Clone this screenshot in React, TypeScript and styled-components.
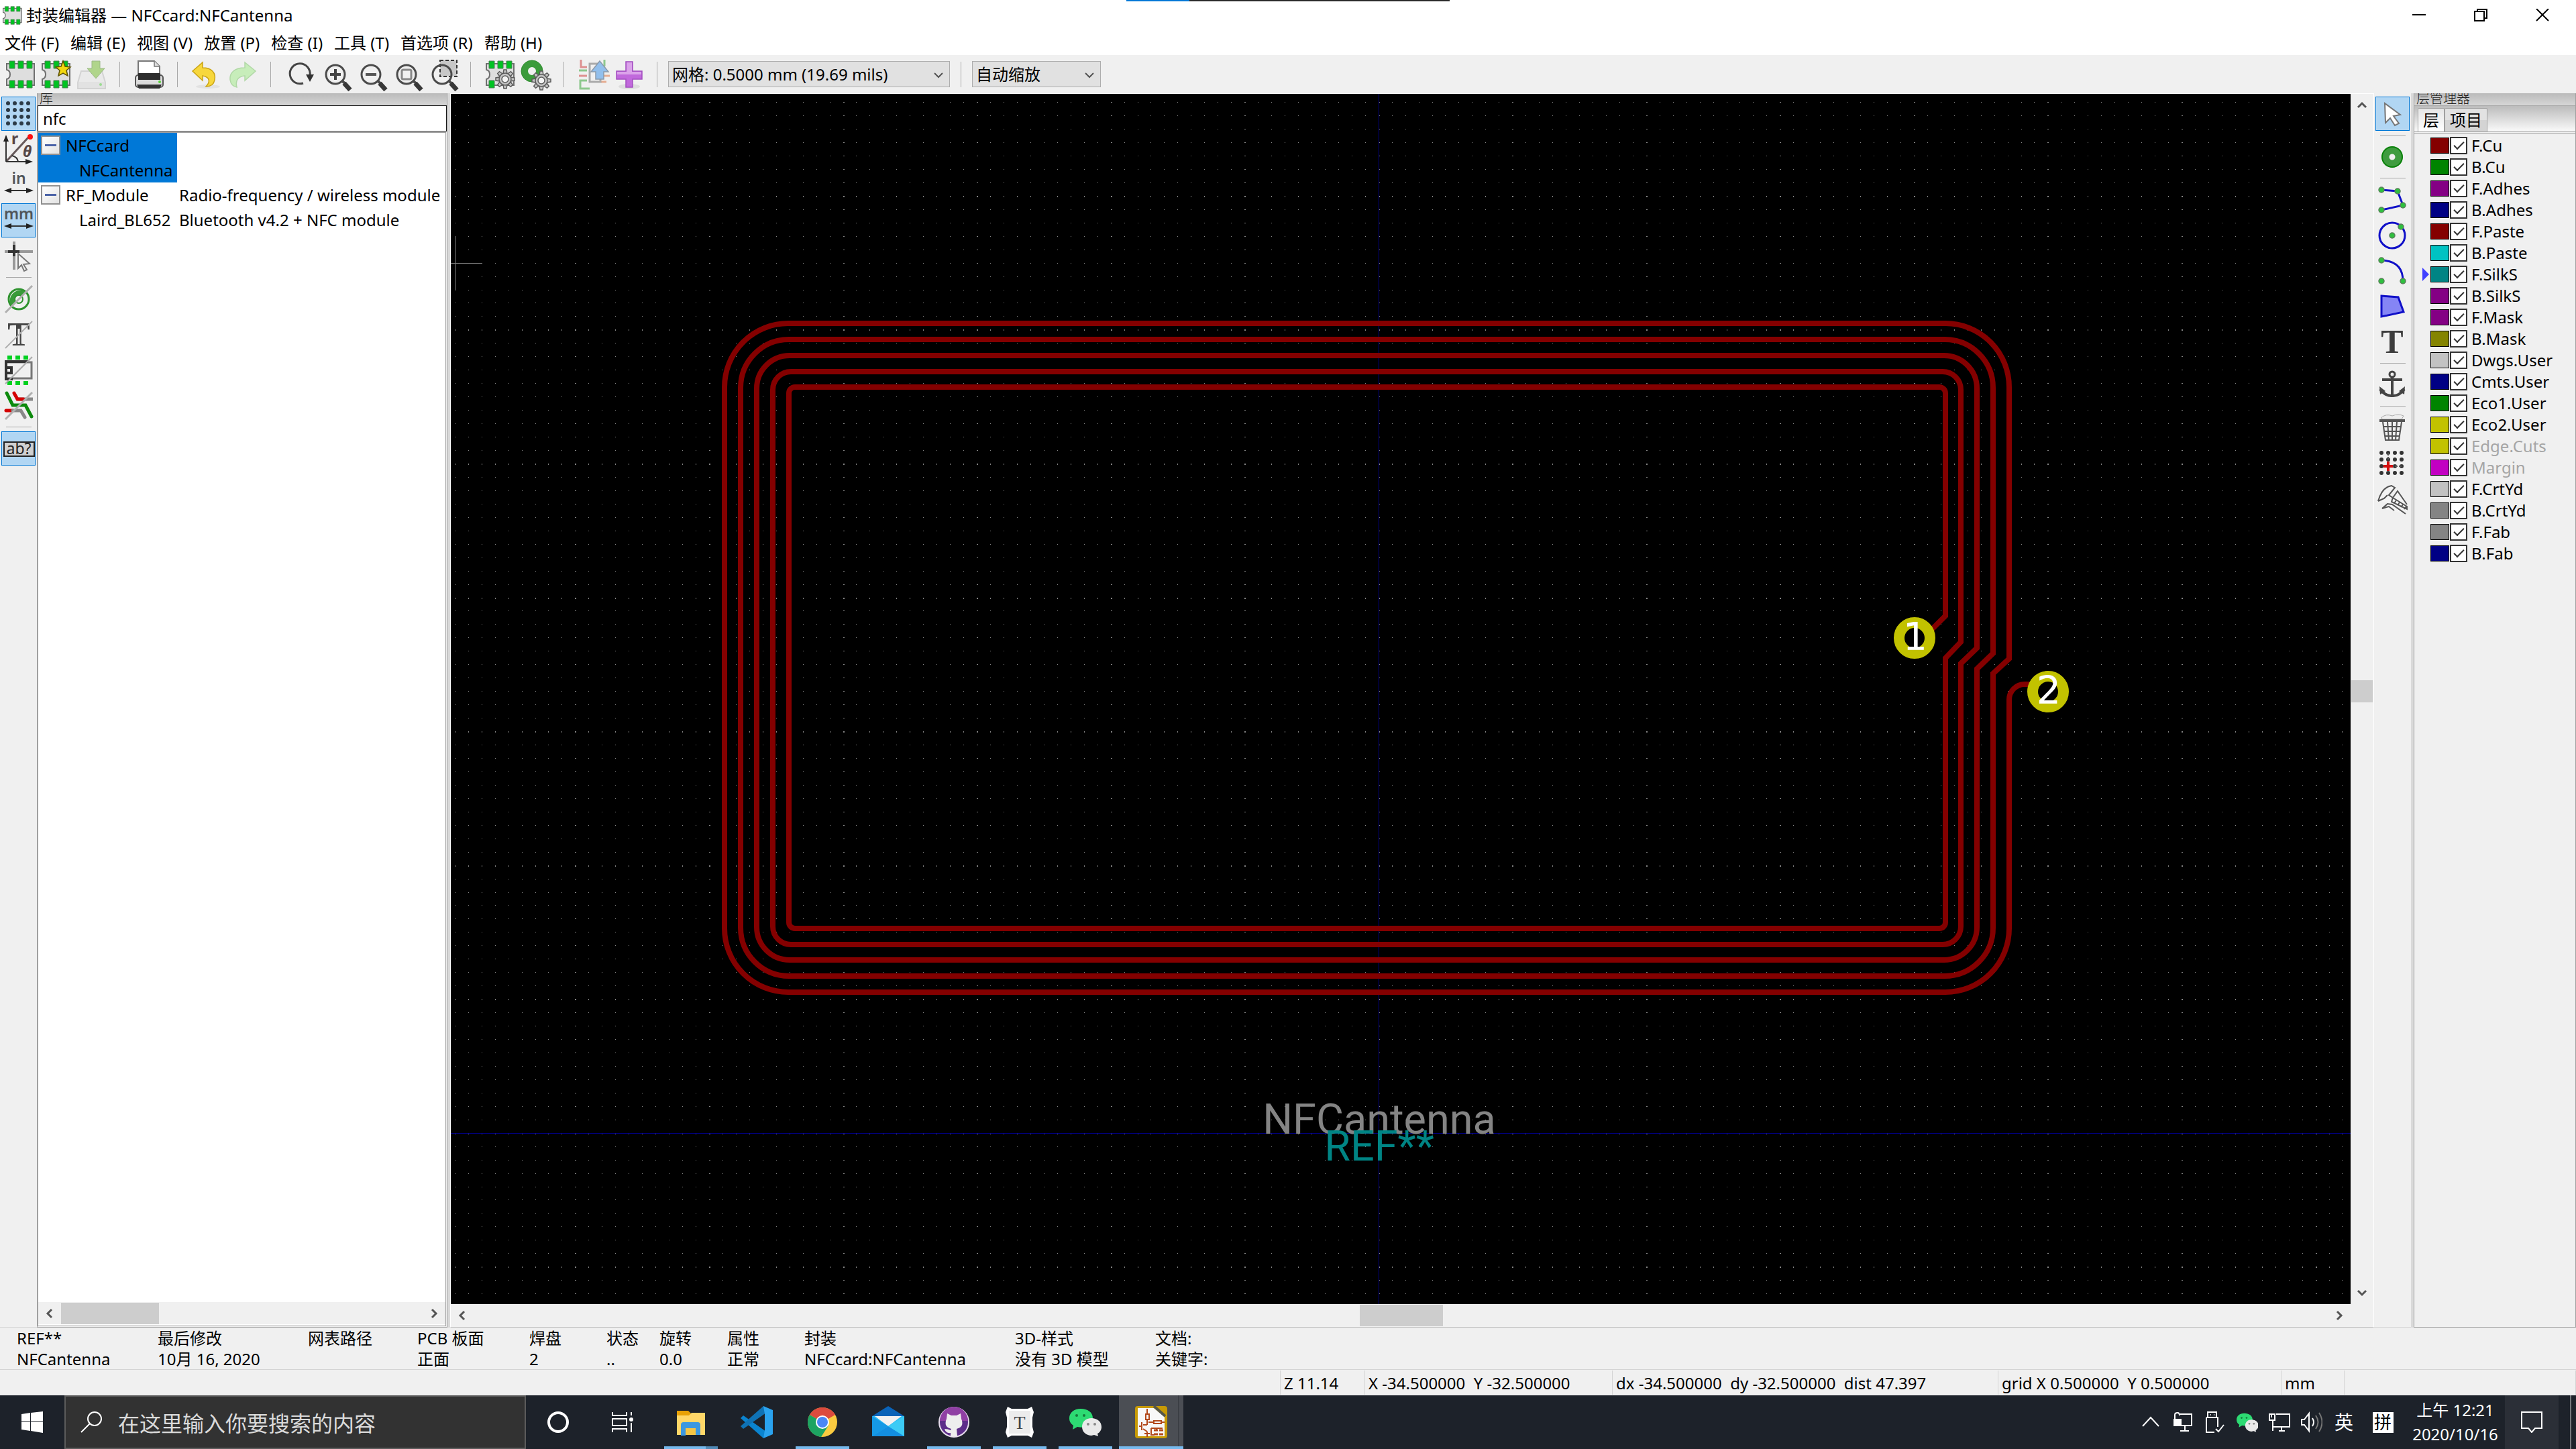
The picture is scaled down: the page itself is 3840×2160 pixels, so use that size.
import React, { useMemo, useState } from "react";
import styled, { createGlobalStyle, css } from "styled-components";

const FONT = `"Noto Sans", "Noto Sans CJK SC", sans-serif`;

const Global = createGlobalStyle`
  *, *::before, *::after { box-sizing: border-box; }
  html, body { margin: 0; background: #f0f0f0; }
  body, button, input, select {
    font-family: ${FONT};
    font-size: 24px;
    line-height: 32px;
    color: #000;
  }
  button { margin: 0; padding: 0; border: 0; background: none; }
  ul { margin: 0; padding: 0; list-style: none; }
  svg { display: block; }
`;

/* ---------- layout ---------- */

const Screen = styled.div`
  display: flex;
  flex-direction: column;
  height: 100vh;
  overflow: hidden;
  position: relative;
`;

const TopStrip = styled.div`
  position: absolute;
  top: 0;
  left: 50%;
  display: flex;
  width: 482px;
  height: 2px;
  margin-left: -241px;
  background: linear-gradient(90deg, #0078d7 94px, #2b2b2b 94px);
`;

const TitleBar = styled.header`
  display: flex;
  align-items: center;
  height: 46px;
  padding: 0 4px 0 2px;
  background: #fff;
`;

const Title = styled.h1`
  flex: 1;
  margin: 0;
  padding-left: 5px;
  font-size: 24px;
  font-weight: 400;
  line-height: 32px;
`;

const WindowButton = styled.button`
  display: grid;
  place-items: center;
  width: 92px;
  height: 42px;
`;

const MenuBar = styled.nav`
  display: flex;
  gap: 17px;
  height: 36px;
  padding-left: 7px;
  background: #fff;
`;

const MenuItem = styled.button`
  white-space: nowrap;
`;

const MainToolbar = styled.div`
  display: flex;
  align-items: center;
  height: 57px;
  padding-left: 3px;
`;

const MainTool = styled.button<{ $dim?: boolean }>`
  display: grid;
  place-items: center;
  width: 53px;
  height: 53px;
  flex: none;
  opacity: ${(p) => (p.$dim ? 0.55 : 1)};
`;

const VSeparator = styled.span`
  width: 1px;
  height: 38px;
  margin: 0 16px;
  flex: none;
  background: #a8a8a8;
`;

const SelectBox = styled.span<{ $width: number }>`
  position: relative;
  width: ${(p) => p.$width}px;
  flex: none;
  svg {
    position: absolute;
    right: 8px;
    top: 12px;
    pointer-events: none;
  }
`;

const Select = styled.select`
  display: block;
  width: 100%;
  height: 39px;
  padding: 0 32px 0 5px;
  appearance: none;
  border: 1px solid #adadad;
  border-radius: 0;
  background: #e1e1e1;
`;

const Work = styled.main`
  display: grid;
  grid-template-columns: 55px 612px 4px minmax(0, 1fr) 55px 4px 242px;
  flex: 1;
  min-height: 0;
`;

const SideTools = styled.div`
  display: flex;
  flex-direction: column;
  align-items: center;
  gap: 2px;
  padding-top: 5px;
  border-bottom: 1px solid #d4d4d4;
`;

const SideTool = styled.button<{ $on?: boolean }>`
  display: grid;
  place-items: center;
  width: 51px;
  height: 51px;
  flex: none;
  border: 1px solid transparent;
  ${(p) =>
    p.$on &&
    css`
      border-color: #0078d7;
      background: #b1d6f3;
    `}
`;

const HSeparator = styled.span`
  width: 38px;
  height: 1px;
  margin: 4px 0;
  flex: none;
  background: #a8a8a8;
`;

const Splitter = styled.div`
  background: #dadada;
`;

/* ---------- library panel ---------- */

const Panel = styled.section`
  display: flex;
  flex-direction: column;
  min-width: 0;
  min-height: 0;
  border: 1px solid #a0a0a0;
  border-top: 0;
`;

const Caption = styled.h2`
  margin: 0;
  height: 18px;
  padding-left: 3px;
  overflow: hidden;
  font-size: 20px;
  font-weight: 300;
  line-height: 16px;
  color: #222;
  background: linear-gradient(#bababa, #d6d6d6);
`;

const Search = styled.input`
  height: 39px;
  padding: 0 7px;
  border: 1px solid #1a1a1a;
  outline: none;
  background: #fff;
`;

const Tree = styled.div`
  display: flex;
  flex-direction: column;
  flex: 1;
  min-height: 0;
  margin: 1px 1px 1px 0;
  padding-bottom: 2px;
  border: 1px solid #a0a0a0;
  background: #fff;
`;

const TreeRows = styled.ul`
  flex: 1;
  overflow: hidden;
`;

const TreeRow = styled.li`
  display: grid;
  grid-template-columns: 207px minmax(0, 1fr);
  height: 37px;
  line-height: 37px;
  white-space: nowrap;
`;

const TreeName = styled.span<{ $child?: boolean; $selected?: boolean }>`
  display: flex;
  align-items: center;
  gap: 8px;
  padding-left: ${(p) => (p.$child ? 61 : 4)}px;
  background: ${(p) => (p.$selected ? "#0078d7" : "none")};
`;

const TreeDescription = styled.span`
  padding-left: 3px;
  overflow: hidden;
`;

const Expander = styled.button`
  display: grid;
  place-items: center;
  width: 29px;
  height: 29px;
  flex: none;
  border: 2px solid #919191;
  background: linear-gradient(135deg, #fff, #e2e2e2);
  &::before {
    content: "";
    width: 17px;
    height: 3px;
    background: #4b63a7;
  }
`;

/* ---------- scroll bars ---------- */

const HScroll = styled.div`
  display: flex;
  align-items: center;
  height: 33px;
  flex: none;
  background: #f0f0f0;
`;

const VScroll = styled.div`
  display: flex;
  flex-direction: column;
  align-items: center;
  background: #f0f0f0;
`;

const ScrollArrow = styled.button`
  display: grid;
  place-items: center;
  width: 34px;
  height: 34px;
  flex: none;
`;

const HTrack = styled.div<{ $before: number; $after: number; $thumb: number }>`
  display: grid;
  grid-template-columns: ${(p) => p.$before}fr ${(p) => p.$thumb}px ${(p) => p.$after}fr;
  flex: 1;
  height: 32px;
  &::before { content: ""; }
  &::after { content: ""; grid-column: 2; grid-row: 1; background: #cdcdcd; }
`;

const VTrack = styled.div`
  display: grid;
  grid-template-rows: 840fr 33px 863fr;
  flex: 1;
  width: 32px;
  &::after { content: ""; grid-row: 2; background: #cdcdcd; }
`;

/* ---------- canvas ---------- */

const Viewport = styled.section`
  display: grid;
  grid-template-columns: minmax(0, 1fr) 34px;
  grid-template-rows: minmax(0, 1fr) 34px;
  min-width: 0;
  min-height: 0;
  border: 1px solid #fff;
  border-bottom-color: #bdbdbd;
`;

const Board = styled.svg`
  width: 100%;
  height: 100%;
  background: #000;
`;

/* ---------- layers panel ---------- */

const TabStrip = styled.div`
  display: flex;
  align-items: flex-end;
  height: 40px;
  padding-left: 5px;
  border-top: 1px solid #a8a8a8;
  border-bottom: 1px solid #a0a0a0;
  background: linear-gradient(#bcbcbc, #fafafa);
`;

const Tab = styled.button<{ $active?: boolean }>`
  height: 35px;
  padding: 0 7px;
  border: 1px solid #a0a0a0;
  border-bottom: 0;
  border-radius: 2px 2px 0 0;
  line-height: 32px;
  background: ${(p) => (p.$active ? "linear-gradient(#e6e6e6, #fff)" : "linear-gradient(#e2e2e2 50%, #d4d4d4 50%)")};
`;

const LayerList = styled.ul`
  flex: 1;
  margin-top: 2px;
  padding-top: 1px;
  border-top: 1px solid #a0a0a0;
  overflow: hidden;
`;

const LayerRow = styled.li`
  display: grid;
  grid-template-columns: 11px 28px 27px minmax(0, 1fr);
  column-gap: 1px;
  align-items: center;
  height: 32px;
  padding-left: 12px;
`;

const Swatch = styled.span<{ $color: string }>`
  height: 24px;
  border: 1px solid #000;
  background: ${(p) => p.$color};
`;

const Check = styled.input`
  display: grid;
  place-items: center;
  width: 26px;
  height: 26px;
  margin: 0;
  appearance: none;
  border: 2px solid #333;
  background: #fff;
  &:checked::before {
    content: "";
    width: 15px;
    height: 8px;
    margin-bottom: 5px;
    border: solid #333;
    border-width: 0 0 2px 2px;
    transform: rotate(-45deg);
  }
`;

const LayerName = styled.label<{ $off?: boolean }>`
  padding-left: 4px;
  color: ${(p) => (p.$off ? "#a5a5a5" : "#000")};
`;

/* ---------- info rows ---------- */

const InfoPanel = styled.dl`
  display: grid;
  grid-template-columns: 210px 224px 163px 167px 115px 79px 101px 115px 314px 209px 1fr;
  height: 63px;
  margin: 0;
  padding: 0 0 0 25px;
  border-bottom: 1px solid #d4d4d4;
  white-space: nowrap;
  line-height: 31px;
  dd { margin: 0; }
`;

const StatusBar = styled.footer`
  display: flex;
  height: 38px;
  padding: 1px 0;
`;

const StatusCell = styled.span<{ $width?: number }>`
  ${(p) => (p.$width ? `width: ${p.$width}px; flex: none;` : "flex: 1;")}
  padding-left: 5px;
  border-right: 1px solid #d4d4d4;
  line-height: 38px;
  white-space: pre;
`;

/* ---------- task bar ---------- */

const TaskBar = styled.div`
  display: flex;
  align-items: stretch;
  height: 80px;
  background: #1d222a;
`;

const TaskButton = styled.button<{ $end?: boolean }>`
  display: grid;
  place-items: center;
  width: 96px;
  flex: none;
  margin-right: ${(p) => (p.$end ? 5 : 0)}px;
`;

const TaskSearch = styled.label`
  display: flex;
  align-items: center;
  gap: 24px;
  width: 688px;
  padding-left: 22px;
  flex: none;
  border: 2px solid #5b5b5b;
  background: #323232;
  input {
    flex: 1;
    min-width: 0;
    height: 50px;
    padding: 2px 0 0;
    border: 0;
    outline: none;
    background: none;
    font-size: 32px;
    line-height: 48px;
  }
  input::placeholder { color: #dadada; opacity: 1; }
`;

const AppButton = styled.button<{ $open?: boolean; $stacked?: boolean; $active?: boolean }>`
  display: grid;
  place-items: center;
  position: relative;
  width: 98px;
  flex: none;
  ${(p) =>
    p.$active &&
    css`
      background: linear-gradient(90deg, transparent 1px, #4b4e54 1px, #4b4e54 89px, #33363c 89px, #4b4e54 91px, #4b4e54 97px, transparent 97px);
    `}
  ${(p) =>
    p.$open &&
    css`
      &::after {
        content: "";
        position: absolute;
        left: ${p.$active ? 1 : 9}px;
        right: ${p.$active ? 1 : 9}px;
        bottom: 0;
        height: 4px;
        background: ${p.$stacked ? "linear-gradient(90deg, #76b9ed 0 78%, #5089b6 78%)" : "#76b9ed"};
      }
    `}
`;

const Tray = styled.div`
  display: flex;
  align-items: center;
  margin-left: auto;
`;

const TrayButton = styled.button<{ $width?: number }>`
  display: grid;
  place-items: center;
  width: ${(p) => p.$width ?? 48}px;
  height: 80px;
  color: #fff;
  font-size: 28px;
`;

const Ime = styled.span`
  display: grid;
  place-items: center;
  width: 31px;
  height: 31px;
  background: #fff;
  color: #000;
  font-size: 26px;
  line-height: 30px;
`;

const Clock = styled.button`
  width: 148px;
  height: 80px;
  color: #fff;
  line-height: 36px;
  white-space: pre-line;
`;

const ActionCenter = styled.button`
  display: grid;
  place-items: center;
  width: 80px;
  height: 80px;
  background: #2b2f37;
`;

const ShowDesktop = styled.button`
  width: 9px;
  height: 80px;
  margin-left: 17px;
  border-left: 2px solid #74777b;
`;

/* ---------- tool icons ---------- */

type Kids = { children?: React.ReactNode };

const Icon = ({ children }: Kids) => (
  <svg width="48" height="48" viewBox="0 0 48 48" fill="none" overflow="visible" aria-hidden="true">
    {children}
  </svg>
);

const Chip = ({ small }: { small?: boolean }) => (
  <>
    <path d="M4 8h41v32H4V31q5-1 5-7t-5-7z" fill="#dedede" stroke="#6f6f6f" strokeWidth="2" />
    <path d="M8 4h8v11H8zM21 4h8v11h-8zM34 4h8v11h-8zM8 33h8v11H8z" fill="#00c322" stroke="#4b7f52" />
    {!small && <path d="M21 33h8v11h-8zM34 33h8v11h-8z" fill="#00c322" stroke="#4b7f52" />}
  </>
);

const gearTeeth = [0, 45, 90, 135, 180, 225, 270, 315];

const Gear = ({ x, y }: { x: number; y: number }) => (
  <g transform={`translate(${x} ${y})`}>
    {gearTeeth.map((a) => (
      <path key={a} d="M-3-8L-2-14H2L3-8z" transform={`rotate(${a})`} fill="#c4c4c4" stroke="#5b5b5b" strokeWidth="1.5" />
    ))}
    <circle r="9" fill="#c4c4c4" stroke="#5b5b5b" strokeWidth="1.5" />
    <circle r="5" fill="#f4f4f4" stroke="#5b5b5b" strokeWidth="1.5" />
  </g>
);

const Lens = ({ children }: Kids) => (
  <Icon>
    {children}
    <circle cx="24" cy="24" r="14" stroke="#4b4b4b" strokeWidth="3" />
    <path d="M33 33l5 4" stroke="#4b4b4b" strokeWidth="4" />
    <path d="M37 37l9 10" stroke="#383838" strokeWidth="7" />
  </Icon>
);

const NewFootprint = () => <Icon><Chip /></Icon>;

const WizardFootprint = () => (
  <Icon>
    <Chip />
    <path d="M35 4l3 8 8 1-6 5 2 8-7-4-7 4 2-8-6-5 8-1z" fill="#f3d810" stroke="#5e5300" strokeWidth="1.5" />
  </Icon>
);

const Save = () => (
  <Icon>
    <path d="M9 19h31l5 17v9H4v-9z" fill="#e6e6e6" stroke="#bdbdbd" strokeWidth="2" />
    <path d="M5 35h39v9H5z" fill="#d8d8d8" />
    <circle cx="38" cy="39" r="2" fill="#55cc44" />
    <path d="M25 4h12v11h7L31 30 18 15h7z" fill="#7cc03a" stroke="#558c30" />
  </Icon>
);

const Printer = () => (
  <Icon>
    <path d="M8 4h24l8 8v16H8z" fill="#fff" stroke="#777" strokeWidth="2" />
    <path d="M32 4v8h8" fill="#ddd" stroke="#777" strokeWidth="1.5" />
    <rect x="4" y="25" width="41" height="18" rx="4" fill="#dcdcdc" stroke="#555" strokeWidth="2" />
    <path d="M8 22h33v10H8z" fill="#2d2d2d" />
    <path d="M6 39h37l-3 6H9z" fill="#333" />
    <circle cx="40" cy="35" r="2" fill="#58d33a" />
  </Icon>
);

const Undo = () => (
  <Icon>
    <ellipse cx="26" cy="42" rx="18" ry="3" fill="#e2e2e2" />
    <path d="M3 19L18 6v8c14 0 20 8 18 18-1 6-5 10-13 10 6-6 7-14-5-16v7z" fill="#f7d73c" stroke="#caa414" strokeWidth="1.5" />
  </Icon>
);

const Redo = () => (
  <Icon>
    <path d="M44 19L28 6v8C12 14 5 22 6 32c1 6 4 10 10 11-2-8 0-16 12-17v7z" fill="#a6ec8e" stroke="#7fc56c" strokeWidth="1.5" />
  </Icon>
);

const Refresh = () => (
  <Icon>
    <path d="M29 37A15 15 0 1 1 39 25" stroke="#444" strokeWidth="3" />
    <path d="M33 24h12l-6 11z" fill="#333" />
  </Icon>
);

const ZoomIn = () => <Lens><path d="M16 24h16M24 16v16" stroke="#444" strokeWidth="4" /></Lens>;
const ZoomOut = () => <Lens><path d="M16 24h16" stroke="#555" strokeWidth="4" /></Lens>;
const ZoomFit = () => <Lens><rect x="17" y="17" width="14" height="14" rx="2" stroke="#888" strokeWidth="3" /></Lens>;
const ZoomSelection = () => (
  <Lens><rect x="21" y="3" width="25" height="24" fill="#c7c7c7" stroke="#333" strokeWidth="2" strokeDasharray="5 3" /></Lens>
);

const ChipGear = () => <Icon><Chip small /><Gear x={32} y={31} /></Icon>;

const PadGear = () => (
  <Icon>
    <circle cx="19" cy="19" r="11" stroke="#3b9b3b" strokeWidth="10" />
    <circle cx="19" cy="19" r="16" stroke="#2c8a2c" />
    <Gear x={33} y={33} />
  </Icon>
);

const LoadFromBoard = () => (
  <Icon>
    <path d="M6 2v11h9M3 26h12" stroke="#dd9090" strokeWidth="3" />
    <path d="M41 2v10M3 18h12M15 33H5v12h14" stroke="#8ec88e" strokeWidth="3" />
    <path d="M40 26h9M36 35h8" stroke="#e5ad92" strokeWidth="3" />
    <path d="M32 8H19v27h16v-7" stroke="#aaa" strokeWidth="3" />
    <path d="M34 4l13 16h-7v11H28V20h-7z" fill="#92bfec" stroke="#8b9aaa" strokeWidth="1.5" />
  </Icon>
);

const Plus = () => (
  <Icon>
    <ellipse cx="25" cy="42" rx="16" ry="4" fill="#ddd" />
    <path d="M20 5h10v14h14v12H30v12H20V31H6V19h14z" fill="#c169dc" stroke="#a34fc0" strokeWidth="1.5" />
    <path d="M21 6h8v14h14v4H7v-4h14z" fill="#dba3ea" />
  </Icon>
);

const dotSteps = [0, 1, 2, 3];

const GridDots = () => (
  <Icon>
    {dotSteps.flatMap((r) => dotSteps.map((c) => <circle key={`${r}${c}`} cx={8 + c * 10} cy={8 + r * 10} r="3" fill="#2c3a46" />))}
  </Icon>
);

const Polar = () => (
  <Icon>
    <path d="M5 42L38 6" stroke="#66595a" strokeWidth="3" />
    <path d="M5 42V7M5 42h34M14 33q8 2 9 9" stroke="#333" strokeWidth="2" />
    <path d="M5 2l4 10H1zM45 42l-11-4v8z" fill="#222" />
    <circle cx="41" cy="5" r="4" fill="#ff1010" />
    <text x="13" y="16" fontSize="23" fontWeight="700" fill="#554646">r</text>
    <text x="30" y="35" fontSize="23" fontWeight="700" fontStyle="italic" fill="#554646">θ</text>
  </Icon>
);

const Units = ({ name }: { name: string }) => (
  <Icon>
    <text x="24" y="22" textAnchor="middle" fontSize="23" fontWeight="600" fill="#505559">{name}</text>
    <path d="M8 32h32" stroke="#333" strokeWidth="2" />
    <path d="M2 32l11-4v8zM46 32l-11-4v8z" fill="#222" />
  </Icon>
);

const CursorShape = () => (
  <Icon>
    <path d="M17 2v42M3 17h42" stroke="#999" strokeWidth="4" />
    <path d="M17 7v17M8 17h17" stroke="#333" strokeWidth="4" />
    <path d="M23 20l17 15-9 1 5 8-4 2-4-9-5 5z" fill="#f4f4f4" stroke="#777" strokeWidth="2" />
  </Icon>
);

const PadSketch = () => (
  <Icon>
    <circle cx="24" cy="24" r="15" stroke="#2f932f" strokeWidth="3" />
    <path d="M13 35A16 16 0 0 1 35 13L28 20A6 6 0 0 0 20 28z" fill="#3a9b3a" />
    <circle cx="24" cy="24" r="6" stroke="#2f932f" strokeWidth="2" fill="#f0f0f0" />
    <path d="M4 44L44 4" stroke="#b0b0b0" strokeWidth="3" />
  </Icon>
);

const TextSketch = () => (
  <Icon>
    <text x="24" y="40" textAnchor="middle" fontSize="50" fontWeight="700" fontFamily='"Liberation Serif", serif' fill="#444">T</text>
    <path d="M24 15v23" stroke="#eee" strokeWidth="3" />
    <path d="M4 44L44 4" stroke="#b0b0b0" strokeWidth="2" />
  </Icon>
);

const OutlineSketch = () => (
  <Icon>
    <path d="M7 2h7v6H7zM19 2h7v6h-7zM31 2h7v6h-7zM7 40h7v6H7zM19 40h7v6h-7zM31 40h7v6h-7z" fill="#00d020" />
    <path d="M5 12h38v24H5z" fill="#f0f0f0" stroke="#777" strokeWidth="3" />
    <path d="M38 11H5v26h10M5 20h8v8H5" stroke="#333" strokeWidth="4" />
    <path d="M4 44L44 4" stroke="#aaa" strokeWidth="2" />
  </Icon>
);

const TrackSketch = () => (
  <Icon>
    <path d="M22 14h23" stroke="#888" strokeWidth="5" />
    <path d="M17 5l5 9h9M5 31h10" stroke="#d40000" strokeWidth="5" strokeLinecap="round" />
    <path d="M15 31h12l6 10" stroke="#888" strokeWidth="5" strokeLinecap="round" />
    <path d="M6 5l9 18h19l9 17" stroke="#0d8a0d" strokeWidth="5" strokeLinecap="round" />
    <path d="M4 44L44 4" stroke="#b0b0b0" strokeWidth="3" />
  </Icon>
);

const HighContrast = () => (
  <Icon>
    <path d="M2 14h45v21H2z" fill="#d0d0d0" stroke="#222" strokeWidth="2" />
    <text x="24" y="32" textAnchor="middle" fontSize="23" fill="#222">ab?</text>
  </Icon>
);

const Pointer = () => (
  <Icon>
    <path d="M12 8l23 17-10 2 8 11-6 3-7-11-7 7z" fill="#fff" stroke="#777" strokeWidth="2" />
  </Icon>
);

const Pad = () => (
  <Icon><circle cx="23" cy="24" r="10" stroke="#3f9c3f" strokeWidth="11" /><circle cx="23" cy="24" r="15" stroke="#0a820a" strokeWidth="2" /></Icon>
);

const Node = ({ x, y }: { x: number; y: number }) => <circle cx={x} cy={y} r="4" fill="#2fbf3f" stroke="#5a805a" strokeWidth="1.5" />;

const DrawLine = () => (
  <Icon>
    <path d="M7 9l24 2 8 21-32 7" stroke="#1010c8" strokeWidth="3" />
    <Node x={7} y={9} /><Node x={31} y={11} /><Node x={39} y={32} /><Node x={7} y={39} />
  </Icon>
);

const DrawCircle = () => (
  <Icon><circle cx="23" cy="24" r="19" stroke="#1010c8" strokeWidth="3" /><Node x={23} y={24} /><Node x={36} y={11} /></Icon>
);

const DrawArc = () => (
  <Icon><path d="M7 8Q39 9 39 39" stroke="#1010c8" strokeWidth="3" /><Node x={7} y={8} /><Node x={39} y={39} /><Node x={7} y={39} /></Icon>
);

const DrawPolygon = () => (
  <Icon><path d="M7 8l25 2 8 22-33 7z" fill="#8585f5" stroke="#1010c8" strokeWidth="3" /></Icon>
);

const DrawText = () => (
  <Icon><text x="23" y="40" textAnchor="middle" fontSize="50" fontWeight="700" fontFamily='"Liberation Serif", serif' fill="#3c3c3c">T</text></Icon>
);

const Anchor = () => (
  <Icon>
    <circle cx="23" cy="8" r="4" stroke="#444" strokeWidth="3" />
    <path d="M23 12v28M8 16h30" stroke="#444" strokeWidth="4" />
    <path d="M5 30q8 11 18 10 10 1 18-10" stroke="#444" strokeWidth="4" />
    <path d="M4 26l1 12 8-5zM42 26l-1 12-8-5z" fill="#444" />
  </Icon>
);

const Trash = () => (
  <Icon>
    <path d="M6 9q8-7 17-3 9-4 17 0l-3 5H9z" fill="#eee" stroke="#aaa" />
    <path d="M4 13h38" stroke="#555" strokeWidth="4" />
    <path d="M9 15l4 27h20l4-27M16 15l2 27M23 15v27M30 15l-2 27M10 22h26M11 29h24M12 36h22" stroke="#555" strokeWidth="2" />
  </Icon>
);

const GridOrigin = () => (
  <Icon>
    {dotSteps.flatMap((r) => dotSteps.map((c) => <circle key={`${r}${c}`} cx={7 + c * 10} cy={8 + r * 10} r="3" fill="#333" />))}
    <path d="M17 8v20h22" stroke="#555" strokeWidth="2" strokeDasharray="4 2" />
    <path d="M17 21v14M10 28h14" stroke="#d41010" strokeWidth="4" />
  </Icon>
);

const Caliper = () => (
  <Icon>
    <path d="M2 27Q8 6 22 4l5 3-9 11 6 4 7-10 14 20M2 27l9-4 5-5M8 38l8-7 7 1 20 14M8 38l10-3 8 6M24 22l21 13v4L22 28z" fill="#f4f4f4" stroke="#555" strokeWidth="2" />
    <path d="M26 30l3-4M31 33l3-4M36 36l3-4M41 39l3-4" stroke="#555" strokeWidth="2" />
  </Icon>
);

const Chevron = ({ turn = 0, color = "#555", weight = 3 }: { turn?: number; color?: string; weight?: number }) => (
  <svg width="18" height="18" viewBox="0 0 18 18" fill="none" aria-hidden="true">
    <path d="M3 6l6 6 6-6" stroke={color} strokeWidth={weight} transform={`rotate(${turn} 9 9)`} />
  </svg>
);

/* ---------- board drawing ---------- */

const PITCH = 19.955;
const ORIGIN = { x: 2055.2, y: 1689.2 };

function gridPath() {
  let d = "";
  for (let row = -77; row <= 12; row++) {
    for (let col = -69; col <= 72; col++) {
      const x = Math.floor(ORIGIN.x + col * PITCH);
      const y = Math.floor(ORIGIN.y + row * PITCH);
      const w = col % 10 === 0 ? 2 : 1;
      const h = row % 10 === 0 ? 2 : 1;
      d += `M${x} ${y}h${w}v${h}h-${w}z`;
    }
  }
  return d;
}

/* Rings run from the innermost turn to the outermost. */
const rings = [
  { l: 1176, t: 577, r: 2900, b: 1384, radius: 9, up: 918, down: 981 },
  { l: 1152, t: 554, r: 2923, b: 1408, radius: 27, up: 957, down: 989 },
  { l: 1128, t: 530, r: 2947, b: 1431, radius: 49, up: 966, down: 997 },
  { l: 1104, t: 506, r: 2971, b: 1455, radius: 72, up: 974, down: 1004 },
  { l: 1080, t: 482, r: 2995, b: 1479, radius: 95, up: 982, down: 1043 },
];

const coil =
  "M2872 946" +
  rings
    .map(({ l, t, r, b, radius: q, up, down }) => {
      const arc = `A${q} ${q} 0 0 0`;
      return `L${r} ${up}V${t + q}${arc} ${r - q} ${t}H${l + q}${arc} ${l} ${t + q}V${b - q}${arc} ${l + q} ${b}H${r - q}${arc} ${r} ${b - q}V${down}`;
    })
    .join("") +
  "A23 23 0 0 1 3018 1020H3030";

const PadMark = ({ x, y, name }: { x: number; y: number; name: string }) => (
  <>
    <circle cx={x} cy={y} r="23" fill="#000" stroke="#c2c200" strokeWidth="16" />
    <text x={x + 1} y={y + 18} textAnchor="middle" fontFamily='"DejaVu Sans", sans-serif' fontSize="57" fill="#fff">{name}</text>
  </>
);

function BoardView() {
  const dots = useMemo(gridPath, []);
  return (
    <Board viewBox="672 140 2832 1804" preserveAspectRatio="xMidYMid slice" role="img" aria-label="NFCantenna">
      <path d={dots} fill="#848484" shapeRendering="crispEdges" />
      <path d="M2055 140h1v1804h-1zM672 1689h2832v1H672z" fill="#000084" />
      <path d={coil} fill="none" stroke="#840000" strokeWidth="8" />
      <PadMark x={2854} y={951} name="1" />
      <PadMark x={3053} y={1031} name="2" />
      <g fontFamily="Roboto, sans-serif" fontSize="63" textAnchor="middle">
        <text x="2056" y="1690" fill="#848484">NFCantenna</text>
        <text x="2056" y="1730" fill="#008484">REF**</text>
      </g>
      <path d="M678 352h1v81h-1zM672 392h47v1h-47z" fill="#848484" />
    </Board>
  );
}

/* ---------- task bar icons ---------- */

const Explorer = () => (
  <Icon>
    <path d="M3 7h17l4 4h20v32H3z" fill="#e8a106" />
    <path d="M3 14h18l4-4h20v33H3z" fill="#ffd768" />
    <path d="M9 43V28q0-4 4-4h21q4 0 4 4v15h-7v-10H16v11H9z" fill="#3c98e0" />
    <path d="M16 33h15v10H16z" fill="#f5c544" />
  </Icon>
);

const VsCode = () => (
  <Icon>
    <path d="M4 14L0 18l34 30 4-10z" fill="#0a84d0" />
    <path d="M0 30l4 4L38 10 34 0z" fill="#0f72b5" />
    <path d="M34 0l14 6v36l-14 6 2-12V12z" fill="#2aa3ef" />
    <path d="M36 13v22L21 24z" fill="#1d222a" />
  </Icon>
);

const Chrome = () => (
  <Icon>
    <circle cx="24" cy="24" r="22" fill="#fbcb40" />
    <path d="M24 24L5 13A22 22 0 0 1 43 13z" fill="#dc4b3e" />
    <path d="M24 13h19l-3-4-16-7z" fill="#dc4b3e" />
    <path d="M5 13A22 22 0 0 0 22 46l11-17-9-5z" fill="#1da462" />
    <circle cx="24" cy="24" r="10" fill="#fff" />
    <circle cx="24" cy="24" r="8" fill="#4a87f5" />
  </Icon>
);

const Mail = () => (
  <Icon>
    <path d="M0 15L24 0l24 15z" fill="#0a63b8" />
    <path d="M0 15h48v30H0z" fill="#2bbcf4" />
    <path d="M4 15h40L24 30z" fill="#f1f1f1" />
    <path d="M0 15l24 15L0 45z" fill="#1599e6" />
    <path d="M0 45l24-15 24 15z" fill="#138ee0" />
    <path d="M48 15v30L24 30z" fill="#3ccbf5" />
  </Icon>
);

const GithubDesktop = () => (
  <Icon>
    <circle cx="24" cy="24" r="22" fill="#5d2d8a" stroke="#e6dcec" strokeWidth="2" />
    <path d="M3 22a21 21 0 0 1 42 0z" fill="#9040a4" />
    <path d="M14 11l6 3h8l6-3 1 8q5 12-7 15l1 11q-5 1-10 0v-5q-7 1-9-6 5 0 9 2l1-2q-12-3-7-15z" fill="#eee" />
  </Icon>
);

const Typora = () => (
  <Icon>
    <path d="M6 1l6 3h24l6-3 3 8-2 8v14l2 8-3 8-6-3H12l-6 3-3-8 2-8V17L3 9z" fill="#fff" />
    <rect x="8" y="7" width="32" height="34" fill="#ececec" />
    <text x="24" y="34" textAnchor="middle" fontSize="28" fontFamily='"Liberation Serif", serif' fill="#444">T</text>
  </Icon>
);

const WeChatShape = () => (
  <>
    <path d="M17 4C7 4 0 10 0 18c0 5 2 8 6 11l-1 6 7-4c14 3 23-4 23-13S27 4 17 4z" fill="#2ddb73" />
    <path d="M33 18c-8 0-14 5-14 13s7 13 14 13l4-1 6 2-1-4c4-2 6-6 6-10 0-8-7-13-15-13z" fill="#e9e9e9" />
    <circle cx="11" cy="14" r="2" fill="#157a3c" /><circle cx="22" cy="14" r="2" fill="#157a3c" />
    <circle cx="28" cy="27" r="2" fill="#888" /><circle cx="38" cy="27" r="2" fill="#888" />
  </>
);

const WeChat = () => <Icon><WeChatShape /></Icon>;

const KiCad = () => (
  <Icon>
    <rect x="0" y="0" width="48" height="48" rx="4" fill="#c79a05" />
    <path d="M4 3h24l16 13v29H4z" fill="#f8f8f8" />
    <path d="M28 0l17 15" stroke="#55574a" strokeWidth="4" />
    <path d="M18 4v8M18 20v8M10 24v12M18 28h-6M6 30h5M28 24h-8M40 24h4M18 38v8M12 34l6 4M14 41h8M24 33h17M24 33v10h5M32 37v-3" stroke="#b2481a" strokeWidth="2" />
    <path d="M16 12h5v8h-5zM28 22h11v4H28z" stroke="#b2481a" strokeWidth="2" />
    <path d="M28 36h6M28 42h6M36 36h6M36 42h6" stroke="#b2481a" strokeWidth="3" />
  </Icon>
);

const trayArt: Record<string, React.ReactNode> = {
  lock: (
    <>
      <path d="M12 4h17v17H7M19 21v8M12 29h13" stroke="#fff" strokeWidth="2" />
      <path d="M2 11h12v11H2z" fill="#fff" /><path d="M4 11V5q0-3 4-3 3 0 3 4" stroke="#fff" strokeWidth="2" />
    </>
  ),
  usb: (
    <>
      <path d="M5 9V1h13v8M3 9h17v14M3 9v22h12M9 5h1M14 5h1" stroke="#fff" strokeWidth="2" />
      <path d="M17 26l4 4 8-10" stroke="#fff" strokeWidth="2" />
    </>
  ),
  network: <path d="M11 4h20v19H6M6 14v15M15 29h9M19 23v6M1 4h8v9H1zM4 4v5" stroke="#fff" strokeWidth="2" />,
  volume: (
    <>
      <path d="M1 12h4l7-9v26l-7-9H1z" stroke="#fff" strokeWidth="2" />
      <path d="M17 10q4 6 0 12" stroke="#fff" strokeWidth="2" />
      <path d="M22 6q7 10 0 20M27 2q9 14 0 28" stroke="#777" strokeWidth="2" />
    </>
  ),
  chat: <g transform="scale(0.68)"><WeChatShape /></g>,
  up: <path d="M4 22l12-13 12 13" stroke="#fff" strokeWidth="2" />,
  note: <path d="M1 1h30v24H21l-5 6-5-6H1z" stroke="#fff" strokeWidth="2" />,
};

const TrayIcon = ({ name }: { name: string }) => (
  <svg width="32" height="32" viewBox="0 0 32 32" fill="none" aria-hidden="true">{trayArt[name]}</svg>
);

/* ---------- data ---------- */

type Tool = { label: string; icon: () => React.ReactElement; dim?: boolean; on?: boolean };

const menus = ["文件 (F)", "编辑 (E)", "视图 (V)", "放置 (P)", "检查 (I)", "工具 (T)", "首选项 (R)", "帮助 (H)"];

const mainTools: Tool[][] = [
  [{ label: "新建封装", icon: NewFootprint }, { label: "封装向导", icon: WizardFootprint }, { label: "保存", icon: Save, dim: true }],
  [{ label: "打印", icon: Printer }],
  [{ label: "撤消", icon: Undo }, { label: "重做", icon: Redo, dim: true }],
  [
    { label: "刷新", icon: Refresh },
    { label: "放大", icon: ZoomIn },
    { label: "缩小", icon: ZoomOut },
    { label: "缩放到合适", icon: ZoomFit },
    { label: "缩放到选择", icon: ZoomSelection },
  ],
  [{ label: "封装属性", icon: ChipGear }, { label: "焊盘属性", icon: PadGear }],
  [{ label: "从电路板加载", icon: LoadFromBoard }, { label: "插入封装", icon: Plus }],
];

const leftTools: Tool[][] = [
  [
    { label: "网格", icon: GridDots, on: true },
    { label: "极坐标", icon: Polar },
    { label: "英寸", icon: () => <Units name="in" /> },
    { label: "毫米", icon: () => <Units name="mm" />, on: true },
    { label: "光标", icon: CursorShape },
  ],
  [
    { label: "焊盘草图", icon: PadSketch },
    { label: "文本草图", icon: TextSketch },
    { label: "轮廓草图", icon: OutlineSketch },
    { label: "高对比度", icon: TrackSketch },
  ],
  [{ label: "搜索树", icon: HighContrast, on: true }],
];

const rightTools: Tool[][] = [
  [{ label: "选择", icon: Pointer, on: true }],
  [{ label: "添加焊盘", icon: Pad }],
  [
    { label: "线", icon: DrawLine },
    { label: "圆", icon: DrawCircle },
    { label: "圆弧", icon: DrawArc },
    { label: "多边形", icon: DrawPolygon },
    { label: "文本", icon: DrawText },
  ],
  [{ label: "锚点", icon: Anchor }],
  [{ label: "删除", icon: Trash }, { label: "网格原点", icon: GridOrigin }, { label: "测量", icon: Caliper }],
];

const layers: [string, string, boolean?][] = [
  ["F.Cu", "#840000"], ["B.Cu", "#008400"], ["F.Adhes", "#840084"], ["B.Adhes", "#000084"],
  ["F.Paste", "#840000"], ["B.Paste", "#00c2c2"], ["F.SilkS", "#008484"], ["B.SilkS", "#840084"],
  ["F.Mask", "#840084"], ["B.Mask", "#848400"], ["Dwgs.User", "#c2c2c2"], ["Cmts.User", "#000084"],
  ["Eco1.User", "#008400"], ["Eco2.User", "#c2c200"], ["Edge.Cuts", "#c2c200", true], ["Margin", "#c200c2", true],
  ["F.CrtYd", "#c2c2c2"], ["B.CrtYd", "#848484"], ["F.Fab", "#848484"], ["B.Fab", "#000084"],
];

const info: [string, string][] = [
  ["REF**", "NFCantenna"], ["最后修改", "10月 16, 2020"], ["网表路径", ""], ["PCB 板面", "正面"], ["焊盘", "2"],
  ["状态", ".."], ["旋转", "0.0"], ["属性", "正常"], ["封装", "NFCcard:NFCantenna"], ["3D-样式", "没有 3D 模型"], ["文档:", "关键字:"],
];

const status: [string, number?][] = [
  [""], ["Z 11.14", 126], ["X -34.500000  Y -32.500000", 369],
  ["dx -34.500000  dy -32.500000  dist 47.397", 575], ["grid X 0.500000  Y 0.500000", 422], ["mm", 94], ["", 345],
];

/* ---------- parts ---------- */

const ToolColumn = ({ groups }: { groups: Tool[][] }) => (
  <SideTools role="toolbar">
    {groups.map((group, g) => (
      <React.Fragment key={g}>
        {g > 0 && <HSeparator />}
        {group.map(({ label, icon: Art, on }) => (
          <SideTool key={label} aria-label={label} $on={on}><Art /></SideTool>
        ))}
      </React.Fragment>
    ))}
  </SideTools>
);

const Dropdown = ({ label, value, width }: { label: string; value: string; width: number }) => (
  <SelectBox $width={width}>
    <Select aria-label={label} defaultValue={value}><option>{value}</option></Select>
    <Chevron weight={2} />
  </SelectBox>
);

function LibraryPanel() {
  const [query, setQuery] = useState("nfc");
  return (
    <Panel>
      <Caption>库</Caption>
      <Search aria-label="库" value={query} onChange={(e) => setQuery(e.target.value)} />
      <Tree>
        <TreeRows>
          <TreeRow><TreeName $selected><Expander aria-label="折叠" />NFCcard</TreeName></TreeRow>
          <TreeRow><TreeName $child $selected>NFCantenna</TreeName></TreeRow>
          <TreeRow>
            <TreeName><Expander aria-label="折叠" />RF_Module</TreeName>
            <TreeDescription>Radio-frequency / wireless module</TreeDescription>
          </TreeRow>
          <TreeRow>
            <TreeName $child>Laird_BL652</TreeName>
            <TreeDescription>Bluetooth v4.2 + NFC module</TreeDescription>
          </TreeRow>
        </TreeRows>
        <HScroll>
          <ScrollArrow aria-label="向左"><Chevron turn={90} /></ScrollArrow>
          <HTrack $before={0} $thumb={146} $after={1} />
          <ScrollArrow aria-label="向右"><Chevron turn={-90} /></ScrollArrow>
        </HScroll>
      </Tree>
    </Panel>
  );
}

function LayersPanel() {
  return (
    <Panel>
      <Caption>层管理器</Caption>
      <TabStrip>
        <Tab $active>层</Tab>
        <Tab>项目</Tab>
      </TabStrip>
      <LayerList>
        {layers.map(([name, color, off]) => (
          <LayerRow key={name}>
            <svg width="10" height="20" viewBox="0 0 10 20" aria-hidden="true">
              {name === "F.SilkS" && <path d="M0 0l10 10L0 20z" fill="#4040ff" />}
            </svg>
            <Swatch $color={color} />
            <Check id={name} type="checkbox" defaultChecked />
            <LayerName htmlFor={name} $off={off}>{name}</LayerName>
          </LayerRow>
        ))}
      </LayerList>
    </Panel>
  );
}

export default function App() {
  return (
    <Screen>
      <Global />
      <TitleBar>
        <svg width="32" height="32" viewBox="0 0 48 48" fill="none" aria-hidden="true"><Chip /></svg>
        <Title>封装编辑器 — NFCcard:NFCantenna</Title>
        <WindowButton aria-label="最小化">
          <svg width="20" height="20" viewBox="0 0 20 20"><path d="M0 9h20" stroke="#000" strokeWidth="2" /></svg>
        </WindowButton>
        <WindowButton aria-label="还原">
          <svg width="20" height="20" viewBox="0 0 20 20" fill="none"><path d="M1 4h14v14H1zM5 4V1h14v13h-4" stroke="#000" strokeWidth="2" /></svg>
        </WindowButton>
        <WindowButton aria-label="关闭">
          <svg width="20" height="20" viewBox="0 0 20 20"><path d="M1 0l18 18M19 0L1 18" stroke="#000" strokeWidth="2" /></svg>
        </WindowButton>
      </TitleBar>
      <MenuBar>{menus.map((m) => <MenuItem key={m}>{m}</MenuItem>)}</MenuBar>

      <MainToolbar role="toolbar">
        {mainTools.map((group, g) => (
          <React.Fragment key={g}>
            {group.map(({ label, icon: Art, dim }) => (
              <MainTool key={label} aria-label={label} $dim={dim}><Art /></MainTool>
            ))}
            <VSeparator />
          </React.Fragment>
        ))}
        <Dropdown label="网格" value="网格: 0.5000 mm (19.69 mils)" width={420} />
        <VSeparator />
        <Dropdown label="缩放" value="自动缩放" width={192} />
      </MainToolbar>

      <Work>
        <ToolColumn groups={leftTools} />
        <LibraryPanel />
        <Splitter />
        <Viewport>
          <BoardView />
          <VScroll>
            <ScrollArrow aria-label="向上"><Chevron turn={180} /></ScrollArrow>
            <VTrack />
            <ScrollArrow aria-label="向下"><Chevron /></ScrollArrow>
          </VScroll>
          <HScroll>
            <ScrollArrow aria-label="向左"><Chevron turn={90} /></ScrollArrow>
            <HTrack $before={1321} $thumb={124} $after={1319} />
            <ScrollArrow aria-label="向右"><Chevron turn={-90} /></ScrollArrow>
          </HScroll>
        </Viewport>
        <ToolColumn groups={rightTools} />
        <Splitter />
        <LayersPanel />
      </Work>

      <InfoPanel>
        {info.map(([term, value]) => (
          <div key={term}><dt>{term}</dt><dd>{value}</dd></div>
        ))}
      </InfoPanel>
      <StatusBar>
        {status.map(([text, width], i) => <StatusCell key={i} $width={width}>{text}</StatusCell>)}
      </StatusBar>

      <TaskBar>
        <TaskButton aria-label="开始">
          <svg width="32" height="32" viewBox="0 0 32 32" fill="#fff"><path d="M0 4l13-2v13H0zM14 2l18-2v15H14zM0 16h13v13L0 27zM14 16h18v16l-18-3z" /></svg>
        </TaskButton>
        <TaskSearch>
          <svg width="32" height="32" viewBox="0 0 32 32" fill="none"><circle cx="21" cy="11" r="10" stroke="#fff" strokeWidth="2" /><path d="M14 18L1 31" stroke="#fff" strokeWidth="2" /></svg>
          <input placeholder="在这里输入你要搜索的内容" aria-label="搜索" />
        </TaskSearch>
        <TaskButton aria-label="Cortana">
          <svg width="32" height="32" viewBox="0 0 32 32" fill="none"><circle cx="16" cy="16" r="14" stroke="#fff" strokeWidth="4" /></svg>
        </TaskButton>
        <TaskButton aria-label="任务视图" $end>
          <svg width="32" height="32" viewBox="0 0 32 32" fill="none" stroke="#fff" strokeWidth="2">
            <path d="M1 1v5h21V1M1 31v-5h21v5M1 11h21v10H1zM29 1v5M29 17v14" /><circle cx="29" cy="12" r="2" fill="#fff" />
          </svg>
        </TaskButton>
        <AppButton aria-label="文件资源管理器" $open $stacked><Explorer /></AppButton>
        <AppButton aria-label="Visual Studio Code"><VsCode /></AppButton>
        <AppButton aria-label="Chrome" $open><Chrome /></AppButton>
        <AppButton aria-label="邮件"><Mail /></AppButton>
        <AppButton aria-label="GitHub Desktop" $open><GithubDesktop /></AppButton>
        <AppButton aria-label="Typora" $open><Typora /></AppButton>
        <AppButton aria-label="微信" $open><WeChat /></AppButton>
        <AppButton aria-label="KiCad" $open $active><KiCad /></AppButton>
        <Tray>
          <TrayButton aria-label="显示隐藏的图标"><TrayIcon name="up" /></TrayButton>
          <TrayButton aria-label="远程"><TrayIcon name="lock" /></TrayButton>
          <TrayButton aria-label="USB"><TrayIcon name="usb" /></TrayButton>
          <TrayButton aria-label="微信"><TrayIcon name="chat" /></TrayButton>
          <TrayButton aria-label="网络"><TrayIcon name="network" /></TrayButton>
          <TrayButton aria-label="音量"><TrayIcon name="volume" /></TrayButton>
          <TrayButton>英</TrayButton>
          <TrayButton $width={68}><Ime>拼</Ime></TrayButton>
          <Clock>{"上午 12:21\n2020/10/16"}</Clock>
          <ActionCenter aria-label="操作中心"><TrayIcon name="note" /></ActionCenter>
          <ShowDesktop aria-label="显示桌面" />
        </Tray>
      </TaskBar>
      <TopStrip />
    </Screen>
  );
}
